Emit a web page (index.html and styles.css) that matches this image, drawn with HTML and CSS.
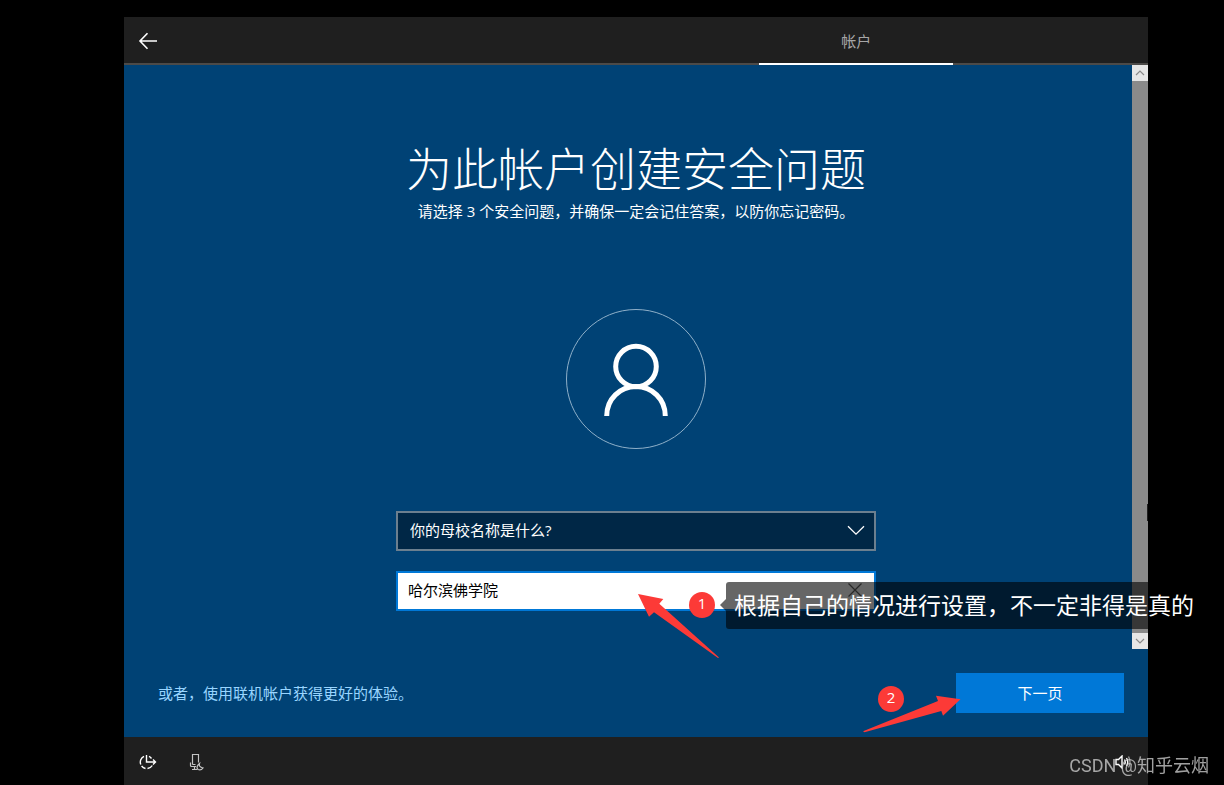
FILE: index.html
```html
<!DOCTYPE html>
<html lang="zh-CN">
<head>
<meta charset="utf-8">
<title>为此帐户创建安全问题</title>
<link rel="stylesheet" href="styles.css">
</head>
<body>
<div class="window">
  <header class="topbar">
    <button class="icon-button back" type="button" aria-label="返回">
      <svg width="20" height="18" viewBox="0 0 20 18" fill="none" stroke="#fff" stroke-width="1.600"><path d="M9.500 1.200 2 9 9.500 16.800M2 9H19"/></svg>
    </button>
    <div class="tab">帐户</div>
  </header>

  <main class="stage">
    <div class="scroll-area">
      <h1 class="title">为此帐户创建安全问题</h1>
      <p class="subtitle">请选择 3 个安全问题，并确保一定会记住答案，以防你忘记密码。</p>
      <svg class="avatar" width="140" height="140" viewBox="0 0 140 140" fill="none">
        <circle cx="70" cy="70" r="69.5" stroke="#8fb0c9" stroke-width="1"/>
        <circle cx="70" cy="57.5" r="20.3" stroke="#fff" stroke-width="5"/>
        <path d="M40.700 107C40.700 90 54 77.500 70 77.500S99.300 90 99.300 107" stroke="#fff" stroke-width="5"/>
      </svg>
      <form class="form">
        <div class="field">
          <select class="select" aria-label="安全问题">
            <option>你的母校名称是什么?</option>
          </select>
          <svg class="chevron" width="18" height="11" viewBox="0 0 18 11" fill="none" stroke="#fff" stroke-width="1.300"><path d="M1 1.200 9 9.200 17 1.200"/></svg>
        </div>
        <div class="field">
          <input class="input" type="text" aria-label="答案" value="哈尔滨佛学院">
          <button class="clear" type="button" aria-label="清除">
            <svg width="14" height="14" viewBox="0 0 14 14" stroke="#666" stroke-width="1.300"><path d="M.5.5l13 13M13.500.5l-13 13"/></svg>
          </button>
          <svg class="pointer pointer-answer" width="82" height="66" viewBox="0 0 82 66" fill="#fc3a37"><path d="M0 1 25.300 6 21.300 10.700 81 64.500 80 65 16 19.300 11 23.700Z"/></svg>
          <span class="badge badge-answer">1</span>
          <div class="callout">根据自己的情况进行设置，不一定非得是真的</div>
        </div>
      </form>
      <div class="scrollbar">
        <button class="scroll-step" type="button" aria-label="向上滚动"><svg width="10" height="6" viewBox="0 0 10 6" fill="none" stroke="#8a8a8a" stroke-width="1.200"><path d="M1 5 5 1 9 5"/></svg></button>
        <span class="caret"></span>
        <button class="scroll-step" type="button" aria-label="向下滚动"><svg width="10" height="6" viewBox="0 0 10 6" fill="none" stroke="#8a8a8a" stroke-width="1.200"><path d="M1 1 5 5 9 1"/></svg></button>
      </div>
    </div>
    <div class="actions">
      <a class="link" href="#">或者，使用联机帐户获得更好的体验。</a>
      <div class="next-wrap">
        <button class="next" type="button">下一页</button>
        <svg class="pointer pointer-next" width="100" height="40" viewBox="0 0 100 40" fill="#fc3a37"><path d="M98.500 5.300 74 1.700 76 7 1 37.300 2.500 38.200 79.300 17 81 21.700Z"/></svg>
        <span class="badge badge-next">2</span>
      </div>
    </div>
  </main>

  <footer class="bottombar">
    <button class="icon-button" type="button" aria-label="轻松使用">
      <svg width="18" height="16" viewBox="0 0 18 16" fill="none" stroke="#fff" stroke-width="1.400"><path d="M7.500 1V8H16.500M14 5.500 16.500 8 14 10.500"/><path d="M5 2.400A6.300 6.300 0 0 0 1.800 10.500M2.600 12A6.300 6.300 0 0 0 6.500 14.500M8.500 14.500A6.300 6.300 0 0 0 13.300 11.500M10 2.400A6.300 6.300 0 0 1 12.500 4.500"/></svg>
    </button>
    <button class="icon-button" type="button" aria-label="麦克风">
      <svg width="16" height="18" viewBox="0 0 16 18" fill="none" stroke="#c4c4c4" stroke-width="1.200"><path d="M4.500 11.500V1.500H10.500V9.500M4.500 11.500H7.500M2.500 9.500V12.500Q2.500 13.500 3.500 13.500H8M6.500 13.500V16.500M4 16.500H9"/><path d="M11.500 10.500Q10.500 14 15 15Q13 17.800 10 16.500Q7.500 14 11.500 10.500Z"/></svg>
    </button>
    <button class="icon-button volume" type="button" aria-label="音量">
      <svg width="18" height="14" viewBox="0 0 18 14" fill="none" stroke="#fff" stroke-width="1.400"><path d="M1 4.500H3.500L7 1V13L3.500 9.500H1ZM9.500 4.500Q11 7 9.500 9.500M11.500 3Q14 7 11.500 11"/><path stroke="#999" d="M13.500 1.500Q16.500 7 13.500 12.500"/></svg>
    </button>
  </footer>
</div>
<div class="watermark">CSDN @知乎云烟</div>
</body>
</html>
```
FILE: styles.css
```css
* {
  box-sizing: border-box;
}

body {
  margin: 0;
  min-height: 100vh;
  padding: 17px 76px 0 124px;
  display: flex;
  flex-direction: column;
  background: #000;
  color: #fff;
  font: 15px/20px "Open Sans", "Noto Sans CJK SC", sans-serif;
}

button,
input,
select {
  font: inherit;
  color: inherit;
  border: 0;
  border-radius: 0;
  margin: 0;
  padding: 0;
  background: none;
}

svg {
  display: block;
}

.window {
  flex: 1;
  display: flex;
  flex-direction: column;
  background: #1f1f1f;
}

.topbar {
  height: 48px;
  display: flex;
  justify-content: space-between;
  border-bottom: 2px solid #4c4a48;
}

.icon-button {
  width: 48px;
  padding-top: 2px;
  display: flex;
  align-items: center;
  justify-content: center;
}

.tab {
  width: 19%;
  height: 48px;
  margin-right: 19%;
  border-bottom: 2px solid #fff;
  color: #a6a6a6;
  line-height: 48px;
  text-align: center;
}

.stage {
  flex: 1;
  display: flex;
  flex-direction: column;
  background: #004275;
}

.scroll-area {
  flex: 1;
  position: relative;
  padding: 73px 24px 38px;
  display: flex;
  flex-direction: column;
  align-items: center;
}

.title {
  margin: 0;
  font-family: "Noto Sans CJK SC", sans-serif;
  font-size: 46px;
  line-height: 56px;
  font-weight: 300;
}

.subtitle {
  margin: 7px 0 88px;
}

.form {
  width: 100%;
  max-width: 480px;
  margin-top: 62px;
  display: grid;
  gap: 20px;
}

.field {
  position: relative;
}

.select,
.input {
  display: block;
  width: 100%;
  height: 40px;
  border: 2px solid #6b7f8f;
  outline: 0;
}

.select {
  appearance: none;
  padding: 0 40px 2px 12px;
  background: #002746;
}

.input {
  padding: 0 40px 3px 10px;
  border-color: #0078d7;
  background: #fff;
  color: #000;
}

.chevron {
  position: absolute;
  right: 11px;
  top: 14px;
  pointer-events: none;
}

.clear {
  position: absolute;
  right: 14px;
  top: 12px;
}

.pointer {
  position: absolute;
}

.pointer-answer {
  left: 242px;
  top: 22px;
}

.pointer-next {
  left: -94px;
  top: 21px;
}

.badge {
  position: absolute;
  width: 26px;
  height: 26px;
  border-radius: 50%;
  background: #fc3a37;
  line-height: 23px;
  text-align: center;
}

.badge-answer {
  left: 293px;
  top: 21px;
}

.badge-next {
  left: -78px;
  top: 13px;
}

.callout {
  position: absolute;
  z-index: 2;
  left: 330px;
  top: 11px;
  padding: 0 8px;
  border-radius: 3px;
  background: rgba(0, 0, 0, 0.6);
  font-size: 23px;
  line-height: 47px;
  white-space: nowrap;
}

.callout::before {
  content: "";
  position: absolute;
  left: -6px;
  top: 17px;
  border: 6px solid transparent;
  border-left: 0;
  border-right-color: rgba(0, 0, 0, 0.6);
}

.scrollbar {
  position: absolute;
  top: 0;
  right: 0;
  bottom: 0;
  width: 16px;
  display: flex;
  flex-direction: column;
  justify-content: space-between;
  background: #8a8a8a;
}

.scroll-step {
  height: 16px;
  display: flex;
  align-items: center;
  justify-content: center;
  background: #e6e6e6;
}

.caret {
  width: 1px;
  height: 17px;
  margin: auto 0 112px auto;
  background: #1f1f1f;
}

.actions {
  padding: 24px 24px 24px 34px;
  display: flex;
  align-items: center;
  justify-content: space-between;
}

.link {
  color: #99d5ff;
  text-decoration: none;
}

.next-wrap {
  position: relative;
}

.next {
  display: block;
  width: 168px;
  height: 40px;
  background: #0078d7;
}

.bottombar {
  height: 48px;
  display: flex;
}

.volume {
  margin-left: auto;
}

.watermark {
  position: fixed;
  right: 15px;
  bottom: 7px;
  color: rgba(200, 200, 200, 0.8);
  font: 18px/24px Roboto, "Noto Sans CJK SC", sans-serif;
}
```
